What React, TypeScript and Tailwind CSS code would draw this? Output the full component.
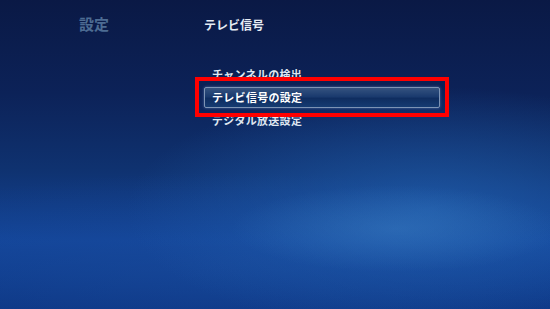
import React from "react";

const items = ["チャンネルの検出", "テレビ信号の設定", "デジタル放送設定"];
const selected = 1;

export default function App() {
  return (
    <div
      className="relative h-[309px] w-[550px] overflow-hidden bg-[radial-gradient(ellipse_30%_14%_at_72%_74%,rgba(70,140,205,0.35),transparent),radial-gradient(ellipse_55%_40%_at_78%_68%,rgba(35,100,180,0.65),transparent),radial-gradient(ellipse_75%_30%_at_40%_86%,rgba(25,75,155,0.55),transparent),linear-gradient(to_bottom,#0a1945_0%,#0c2258_30%,#0f3270_55%,#13459a_78%,#0d3684_100%)] text-[#e8edf5]"
      style={{ fontFamily: '"Noto Sans CJK JP", "Noto Sans", sans-serif' }}
    >
      {/* header */}
      <div className="flex items-end pt-[15px]">
        <div className="w-[204px] pl-[79px] text-[15px] leading-[18px] font-bold text-[#4d6c93]">設定</div>
        <div className="text-[12px] leading-[16px] font-bold text-[#e6ecf4]">テレビ信号</div>
      </div>

      {/* menu */}
      <div className="mt-[30px] flex w-[440px] flex-col pl-[204px]">
        {items.map((label, i) => (
          <div key={label} className="flex h-[23px] items-center">
            {i === selected ? (
              <div className="flex h-[21px] w-full items-center rounded-[2px] border border-[#7d93b4] bg-[linear-gradient(to_bottom,#34527f_0%,#1a3a6e_45%,#0f2d60_55%,#153b72_100%)] pl-[7px] text-[11px] font-bold tracking-[0.3px] text-white shadow-[0_0_3px_rgba(140,170,220,0.5)]">
                {label}
              </div>
            ) : (
              <div className="pl-[8px] text-[11px] font-bold tracking-[0.3px] text-[#dfe6f0]">{label}</div>
            )}
          </div>
        ))}
      </div>

      {/* annotation highlight */}
      <div className="absolute left-[195px] top-[77px] h-[40px] w-[254px] border-[4px] border-[#ff0000]" />
    </div>
  );
}
